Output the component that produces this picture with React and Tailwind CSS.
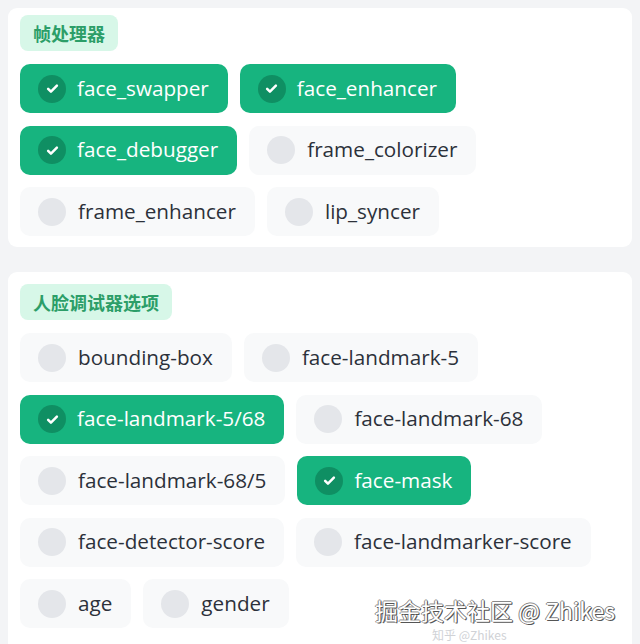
import React from "react";

const Check = () => (
  <span className="flex h-[28px] w-[28px] shrink-0 items-center justify-center rounded-full bg-[#0f8f63]">
    <svg width="15" height="15" viewBox="0 0 24 24" fill="none" stroke="white" strokeWidth="4" strokeLinecap="round" strokeLinejoin="round">
      <path d="M5 12.5l4.5 4.5L19 7.5" />
    </svg>
  </span>
);

const Chip = ({ label, on }) =>
  on ? (
    <div className="flex h-[49px] items-center gap-[11px] rounded-[10px] bg-[#17b47f] pl-[18px] pr-[19px] text-[20.7px] text-white">
      <Check />
      <span>{label}</span>
    </div>
  ) : (
    <div className="flex h-[49px] items-center gap-[12px] rounded-[10px] bg-[#f8f9fa] pl-[18px] pr-[19px] text-[20.7px] text-[#2c313a]">
      <span className="h-[28px] w-[28px] shrink-0 rounded-full bg-[#e4e6ea]" />
      <span>{label}</span>
    </div>
  );

const Tag = ({ children }) => (
  <div className="flex">
    <div className="flex h-[36px] items-center rounded-[8px] bg-[#d7f7e8] px-[13px] text-[18px] font-bold text-[#2c9e68]" style={{ fontFamily: '"Noto Sans CJK SC", "Noto Sans", sans-serif' }}>
      {children}
    </div>
  </div>
);

const Card = ({ title, items, className = "" }) => (
  <div className={"mx-[8px] flex flex-col gap-[13px] rounded-[9px] bg-white px-[12px] pb-[11px] " + className}>
    <Tag>{title}</Tag>
    <div className="flex flex-wrap gap-x-[12px] gap-y-[12.5px]">
      {items.map(([l, on]) => (
        <Chip key={l} label={l} on={on} />
      ))}
    </div>
  </div>
);

export default function App() {
  return (
    <div className="relative h-[644px] w-[640px] overflow-hidden bg-[#f3f4f6] pt-[8px]" style={{ fontFamily: '"Open Sans", "Noto Sans CJK SC", sans-serif' }}>
      <Card
        className="pt-[7px]"
        title="帧处理器"
        items={[
          ["face_swapper", true],
          ["face_enhancer", true],
          ["face_debugger", true],
          ["frame_colorizer", false],
          ["frame_enhancer", false],
          ["lip_syncer", false],
        ]}
      />
      <div className="h-[25px]" />
      <Card
        className="pt-[12px] pb-[40px]"
        title="人脸调试器选项"
        items={[
          ["bounding-box", false],
          ["face-landmark-5", false],
          ["face-landmark-5/68", true],
          ["face-landmark-68", false],
          ["face-landmark-68/5", false],
          ["face-mask", true],
          ["face-detector-score", false],
          ["face-landmarker-score", false],
          ["age", false],
          ["gender", false],
        ]}
      />
      <div className="absolute left-[432px] top-[629px] text-[12px] leading-none text-[#d0d2d6]" style={{ fontFamily: '"Noto Sans CJK SC", sans-serif' }}>
        知乎 @Zhikes
      </div>
      <div
        className="absolute left-[375px] top-[599px] text-[23px] leading-none text-white"
        style={{
          fontFamily: '"Noto Sans CJK SC", "Noto Sans", sans-serif',
          textShadow: "1px 1px 0 #555, -1px 0 0 #888, 0 -1px 0 #888, 1px 0 0 #666",
        }}
      >
        掘金技术社区 @ Zhikes
      </div>
    </div>
  );
}
